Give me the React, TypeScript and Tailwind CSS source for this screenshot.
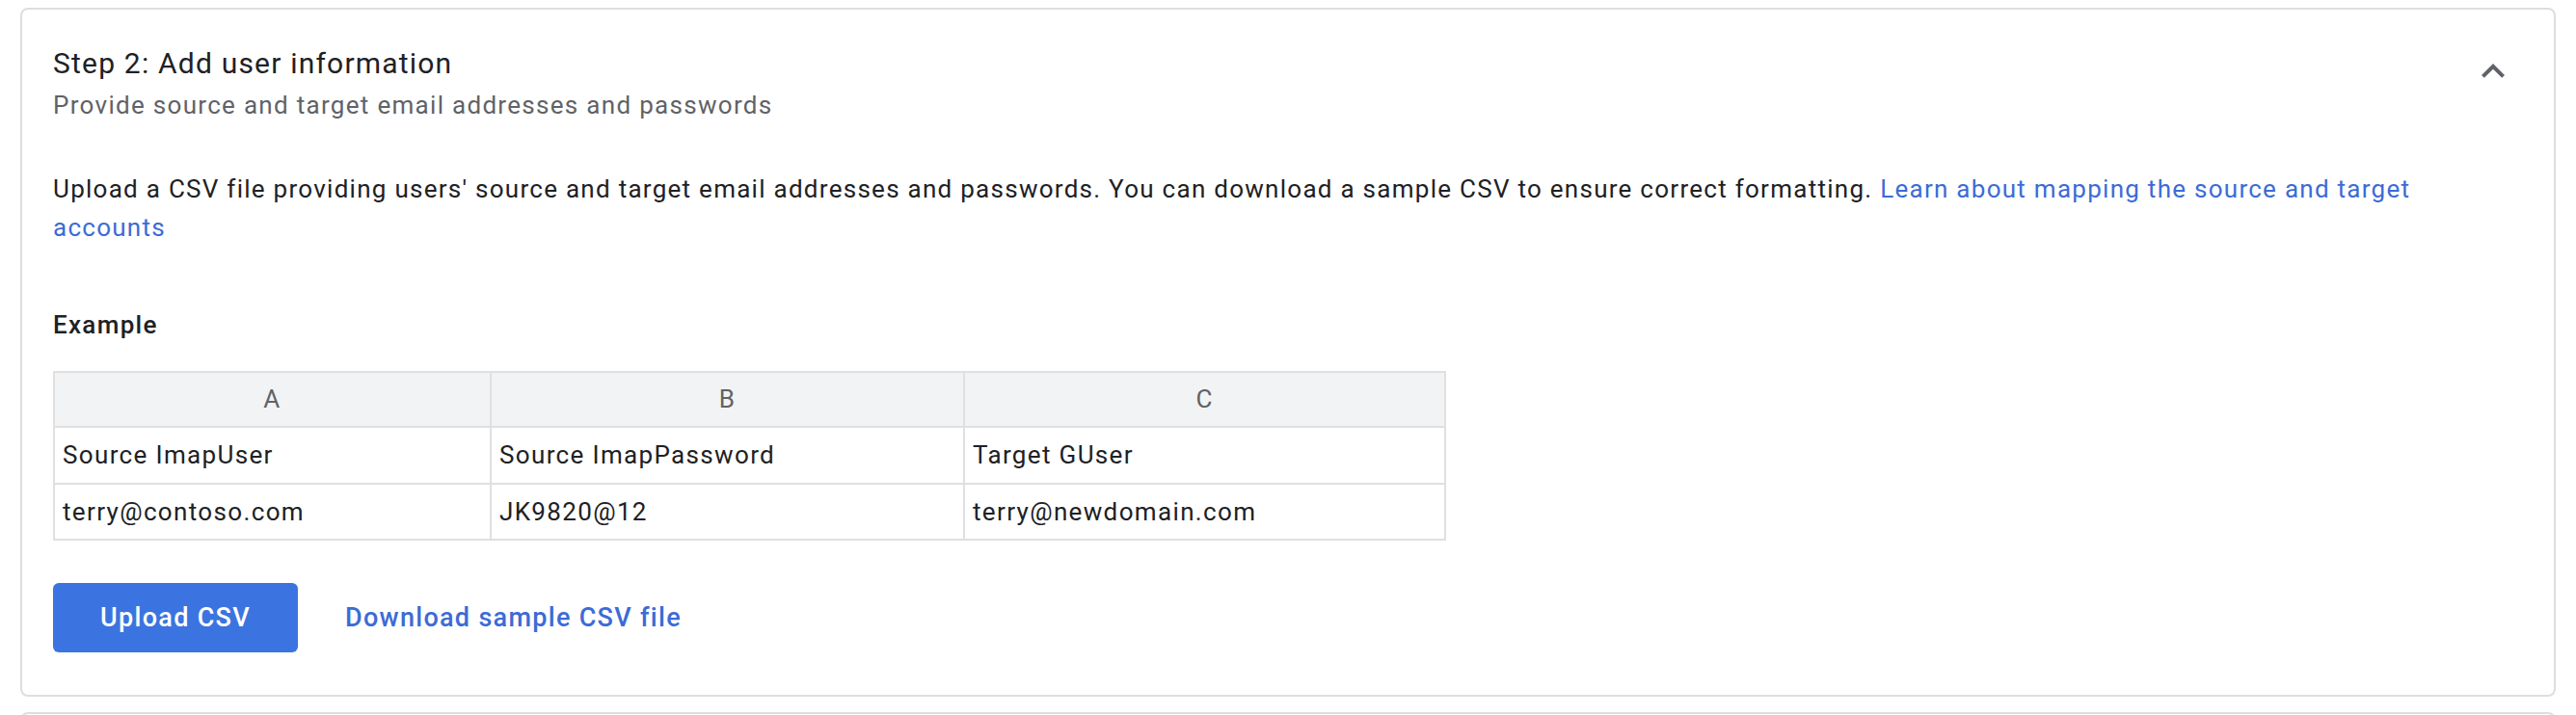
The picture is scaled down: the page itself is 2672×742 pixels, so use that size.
const columns = ["A", "B", "C"];

const rows = [
  ["Source ImapUser", "Source ImapPassword", "Target GUser"],
  ["terry@contoso.com", "JK9820@12", "terry@newdomain.com"],
];

function ExpandLess() {
  return (
    <svg viewBox="0 0 24 24" className="h-12 w-12 fill-[#5f6368]" aria-hidden>
      <path d="M12 8l-6 6 1.41 1.41L12 10.83l4.59 4.58L18 14z" />
    </svg>
  );
}

function ExampleTable() {
  return (
    <div className="mt-[32px] grid w-fit grid-cols-[451px_489px_497px] gap-[2px] bg-[#e0e0e0] p-[2px]">
      {columns.map((c) => (
        <div
          key={c}
          className="flex h-[55px] items-center justify-center bg-[#f1f3f4] text-[26px] tracking-[1.3px] text-[#5f6368]"
        >
          {c}
        </div>
      ))}
      {rows.map((row, i) =>
        row.map((cell) => (
          <div
            key={cell}
            className={`flex items-center bg-white pl-[8px] text-[26px] tracking-[1.35px] text-[#202124] ${
              i === 0 ? "h-[57px]" : "h-[56px]"
            }`}
          >
            {cell}
          </div>
        ))
      )}
    </div>
  );
}

export default function App() {
  return (
    <div className="min-h-screen bg-white px-[21px] pt-[8px] font-['Roboto',sans-serif]">
      <section className="rounded-[8px] border-2 border-[#dedede] px-[32px] pb-[44px] pt-[36px]">
        <div className="flex items-start justify-between">
          <div>
            <h2 className="text-[30px] leading-[40px] tracking-[1.2px] text-[#202124]">
              Step 2: Add user information
            </h2>
            <p className="mt-[5px] text-[26px] leading-[36px] tracking-[1.3px] text-[#5f6368]">
              Provide source and target email addresses and passwords
            </p>
          </div>
          <button type="button" className="mr-[7px] mt-[4px]" aria-label="Collapse step">
            <ExpandLess />
          </button>
        </div>

        <p className="mt-[49px] text-[26px] leading-[40px] tracking-[1.27px] text-[#202124]">
          Upload a CSV file providing users' source and target email addresses and passwords. You
          can download a sample CSV to ensure correct formatting.{" "}
          <a href="#" className="text-[#3c6bd6]">
            Learn about mapping the source and target accounts
          </a>
        </p>

        <h3 className="mt-[65px] text-[26px] font-medium leading-[32px] tracking-[1.3px] text-[#202124]">
          Example
        </h3>

        <ExampleTable />

        <div className="mt-[44px] flex items-center gap-[49px]">
          <button
            type="button"
            className="h-[72px] w-[254px] rounded-[6px] bg-[#3b74e0] text-[27px] font-medium tracking-[1.3px] text-white"
          >
            Upload CSV
          </button>
          <a href="#" className="text-[27px] font-medium tracking-[1.3px] text-[#3c6bd6]">
            Download sample CSV file
          </a>
        </div>
      </section>
      <div className="mt-[16px] h-[8px] rounded-t-[8px] border-x-2 border-t-2 border-[#dedede]" />
    </div>
  );
}
